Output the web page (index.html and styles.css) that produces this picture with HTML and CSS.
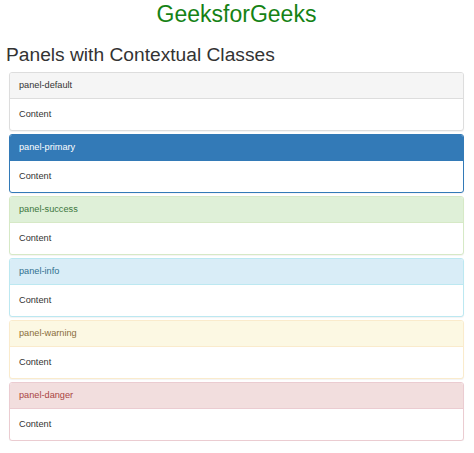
FILE: index.html
```html
<!DOCTYPE html>
<html>
<head>
<meta charset="utf-8">
<link rel="stylesheet" href="styles.css">
</head>
<body>
<div class="page">
  <h1 class="brand">GeeksforGeeks</h1>
  <h2 class="title">Panels with Contextual Classes</h2>
  <div class="panels">
    <div class="panel panel-default">
      <div class="panel-heading">panel-default</div>
      <div class="panel-body">Content</div>
    </div>
    <div class="panel panel-primary">
      <div class="panel-heading">panel-primary</div>
      <div class="panel-body">Content</div>
    </div>
    <div class="panel panel-success">
      <div class="panel-heading">panel-success</div>
      <div class="panel-body">Content</div>
    </div>
    <div class="panel panel-info">
      <div class="panel-heading">panel-info</div>
      <div class="panel-body">Content</div>
    </div>
    <div class="panel panel-warning">
      <div class="panel-heading">panel-warning</div>
      <div class="panel-body">Content</div>
    </div>
    <div class="panel panel-danger">
      <div class="panel-heading">panel-danger</div>
      <div class="panel-body">Content</div>
    </div>
  </div>
</div>
</body>
</html>
```
FILE: styles.css
```css
html, body {
  margin: 0;
  padding: 0;
  background: #fff;
}
body {
  font-family: "Liberation Sans", Arial, sans-serif;
  color: #333;
}
.page {
  padding: 0 10px 0 9px;
}
.brand {
  margin: 0;
  padding-top: 1px;
  font-size: 23px;
  line-height: 26px;
  font-weight: normal;
  color: #158215;
  text-align: center;
}
.title {
  margin: 16px 0 5px -3px;
  font-size: 19.2px;
  line-height: 24px;
  font-weight: normal;
  color: #333;
}
.panels {
  display: flex;
  flex-direction: column;
  gap: 3px;
}
.panel {
  border: 1px solid #ddd;
  border-radius: 3px;
  background: #fff;
  box-shadow: 0 1px 1px rgba(0,0,0,.05);
  overflow: hidden;
}
.panel-heading {
  height: 25px;
  line-height: 25px;
  padding: 0 9px;
  font-size: 9.2px;
  border-bottom: 1px solid transparent;
}
.panel-body {
  height: 31px;
  line-height: 31px;
  padding: 0 9px;
  font-size: 9.2px;
  color: #333;
}
.panel-default { border-color: #ddd; }
.panel-default .panel-heading { background: #f5f5f5; color: #333; border-color: #ddd; }
.panel-primary { border-color: #337ab7; }
.panel-primary .panel-heading { background: #337ab7; color: #fff; border-color: #337ab7; }
.panel-success { border-color: #d6e9c6; }
.panel-success .panel-heading { background: #dff0d8; color: #3c763d; border-color: #d6e9c6; }
.panel-info { border-color: #bce8f1; }
.panel-info .panel-heading { background: #d9edf7; color: #31708f; border-color: #bce8f1; }
.panel-warning { border-color: #faebcc; }
.panel-warning .panel-heading { background: #fcf8e3; color: #8a6d3b; border-color: #faebcc; }
.panel-danger { border-color: #ebccd1; }
.panel-danger .panel-heading { background: #f2dede; color: #a94442; border-color: #ebccd1; }
```
